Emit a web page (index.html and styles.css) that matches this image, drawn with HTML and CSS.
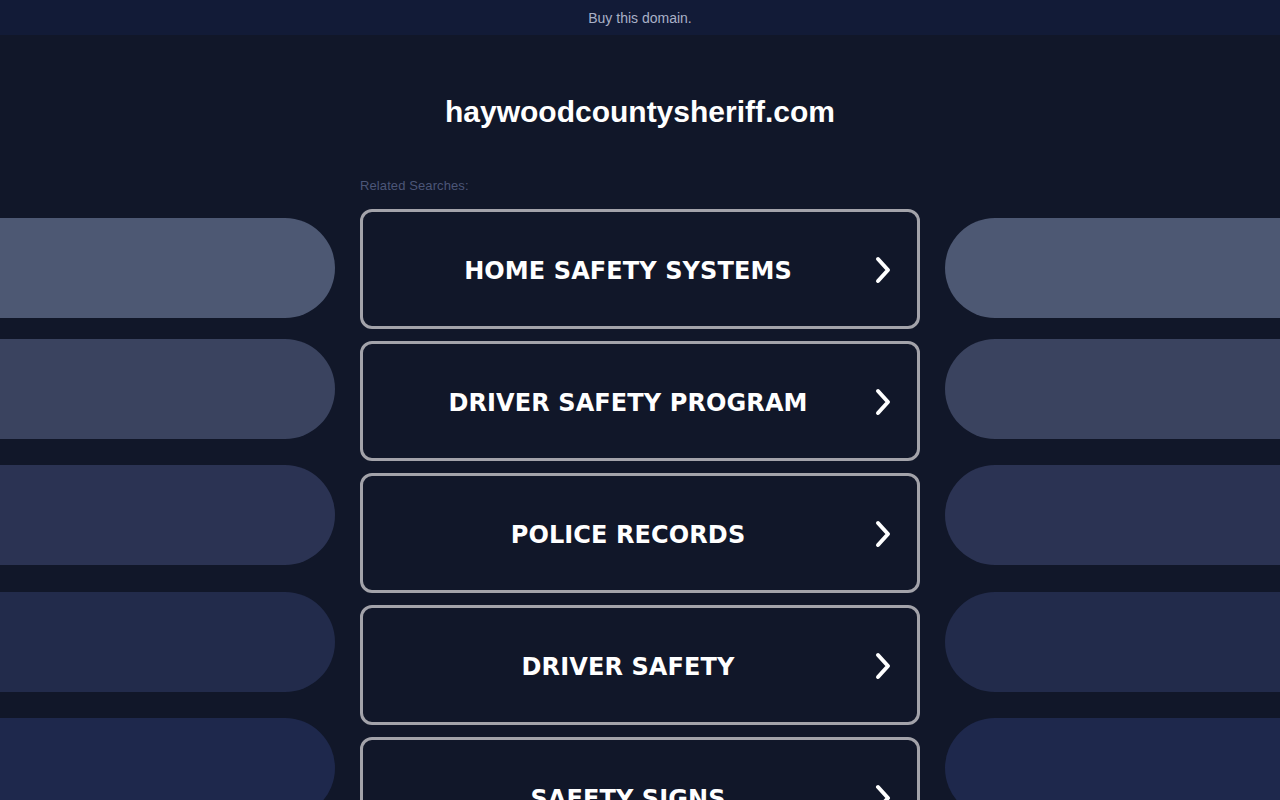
FILE: index.html
```html
<!DOCTYPE html>
<html>
<head>
<meta charset="utf-8">
<link rel="stylesheet" href="styles.css">
</head>
<body>
<div class="topbar"><a class="buy">Buy this domain.</a></div>
<div class="stage">
  <div class="side left">
    <div class="pill p1"></div>
    <div class="pill p2"></div>
    <div class="pill p3"></div>
    <div class="pill p4"></div>
    <div class="pill p5"></div>
  </div>
  <div class="center">
    <h1 class="domain">haywoodcountysheriff.com</h1>
    <div class="related">Related Searches:</div>
    <div class="list">
      <a class="item"><span class="label">HOME SAFETY SYSTEMS</span><svg class="chev" viewBox="0 0 20 30" width="20" height="30"><path d="M5 4 L15 15 L5 26" fill="none" stroke="#fff" stroke-width="4" stroke-linecap="round" stroke-linejoin="round"/></svg></a>
      <a class="item"><span class="label">DRIVER SAFETY PROGRAM</span><svg class="chev" viewBox="0 0 20 30" width="20" height="30"><path d="M5 4 L15 15 L5 26" fill="none" stroke="#fff" stroke-width="4" stroke-linecap="round" stroke-linejoin="round"/></svg></a>
      <a class="item"><span class="label">POLICE RECORDS</span><svg class="chev" viewBox="0 0 20 30" width="20" height="30"><path d="M5 4 L15 15 L5 26" fill="none" stroke="#fff" stroke-width="4" stroke-linecap="round" stroke-linejoin="round"/></svg></a>
      <a class="item"><span class="label">DRIVER SAFETY</span><svg class="chev" viewBox="0 0 20 30" width="20" height="30"><path d="M5 4 L15 15 L5 26" fill="none" stroke="#fff" stroke-width="4" stroke-linecap="round" stroke-linejoin="round"/></svg></a>
      <a class="item"><span class="label">SAFETY SIGNS</span><svg class="chev" viewBox="0 0 20 30" width="20" height="30"><path d="M5 4 L15 15 L5 26" fill="none" stroke="#fff" stroke-width="4" stroke-linecap="round" stroke-linejoin="round"/></svg></a>
    </div>
  </div>
  <div class="side right">
    <div class="pill p1"></div>
    <div class="pill p2"></div>
    <div class="pill p3"></div>
    <div class="pill p4"></div>
    <div class="pill p5"></div>
  </div>
</div>
</body>
</html>
```
FILE: styles.css
```css
html, body {
  margin: 0;
  padding: 0;
  background: #111729;
  height: 800px;
  overflow: hidden;
  font-family: "Liberation Sans", Arial, sans-serif;
}
.topbar {
  height: 35px;
  background: #121b37;
  display: flex;
  align-items: center;
  justify-content: center;
}
.buy {
  color: #a9b1c7;
  font-size: 14px;
  padding-top: 1px;
}
.stage {
  display: grid;
  grid-template-columns: 335px 1fr 335px;
  column-gap: 25px;
}
.side {
  display: flex;
  flex-direction: column;
  padding-top: 183px;
}
.pill {
  height: 100px;
  flex: none;
}
.left .pill { border-radius: 0 50px 50px 0; }
.right .pill { border-radius: 50px 0 0 50px; margin-right: -40px; }
.pill.p1 { background: #4d5873; }
.pill.p2 { background: #3a435f; margin-top: 21px; }
.pill.p3 { background: #2b3353; margin-top: 26px; }
.pill.p4 { background: #222b4b; margin-top: 27px; }
.pill.p5 { background: #1e284c; margin-top: 26px; }
.center {
  display: flex;
  flex-direction: column;
}
.domain {
  margin: 0;
  padding-top: 60px;
  height: 33px;
  line-height: 33px;
  text-align: center;
  color: #ffffff;
  font-size: 30px;
  font-weight: bold;
}
.related {
  margin-top: 50px;
  color: #4c5678;
  font-size: 13px;
  line-height: 15px;
  height: 15px;
  letter-spacing: 0.1px;
}
.list {
  margin-top: 16px;
  display: flex;
  flex-direction: column;
  gap: 12px;
}
.item {
  box-sizing: border-box;
  height: 120px;
  border: 3px solid #a3a3aa;
  border-radius: 12px;
  display: flex;
  align-items: center;
  position: relative;
  flex: none;
}
.label {
  flex: 1;
  text-align: center;
  padding-right: 24px;
  padding-top: 4px;
  color: #ffffff;
  font-family: "DejaVu Sans", Verdana, sans-serif;
  font-weight: bold;
  font-size: 24px;
  letter-spacing: 0.1px;
}
.chev {
  position: absolute;
  right: 24px;
  top: 43px;
}
```
